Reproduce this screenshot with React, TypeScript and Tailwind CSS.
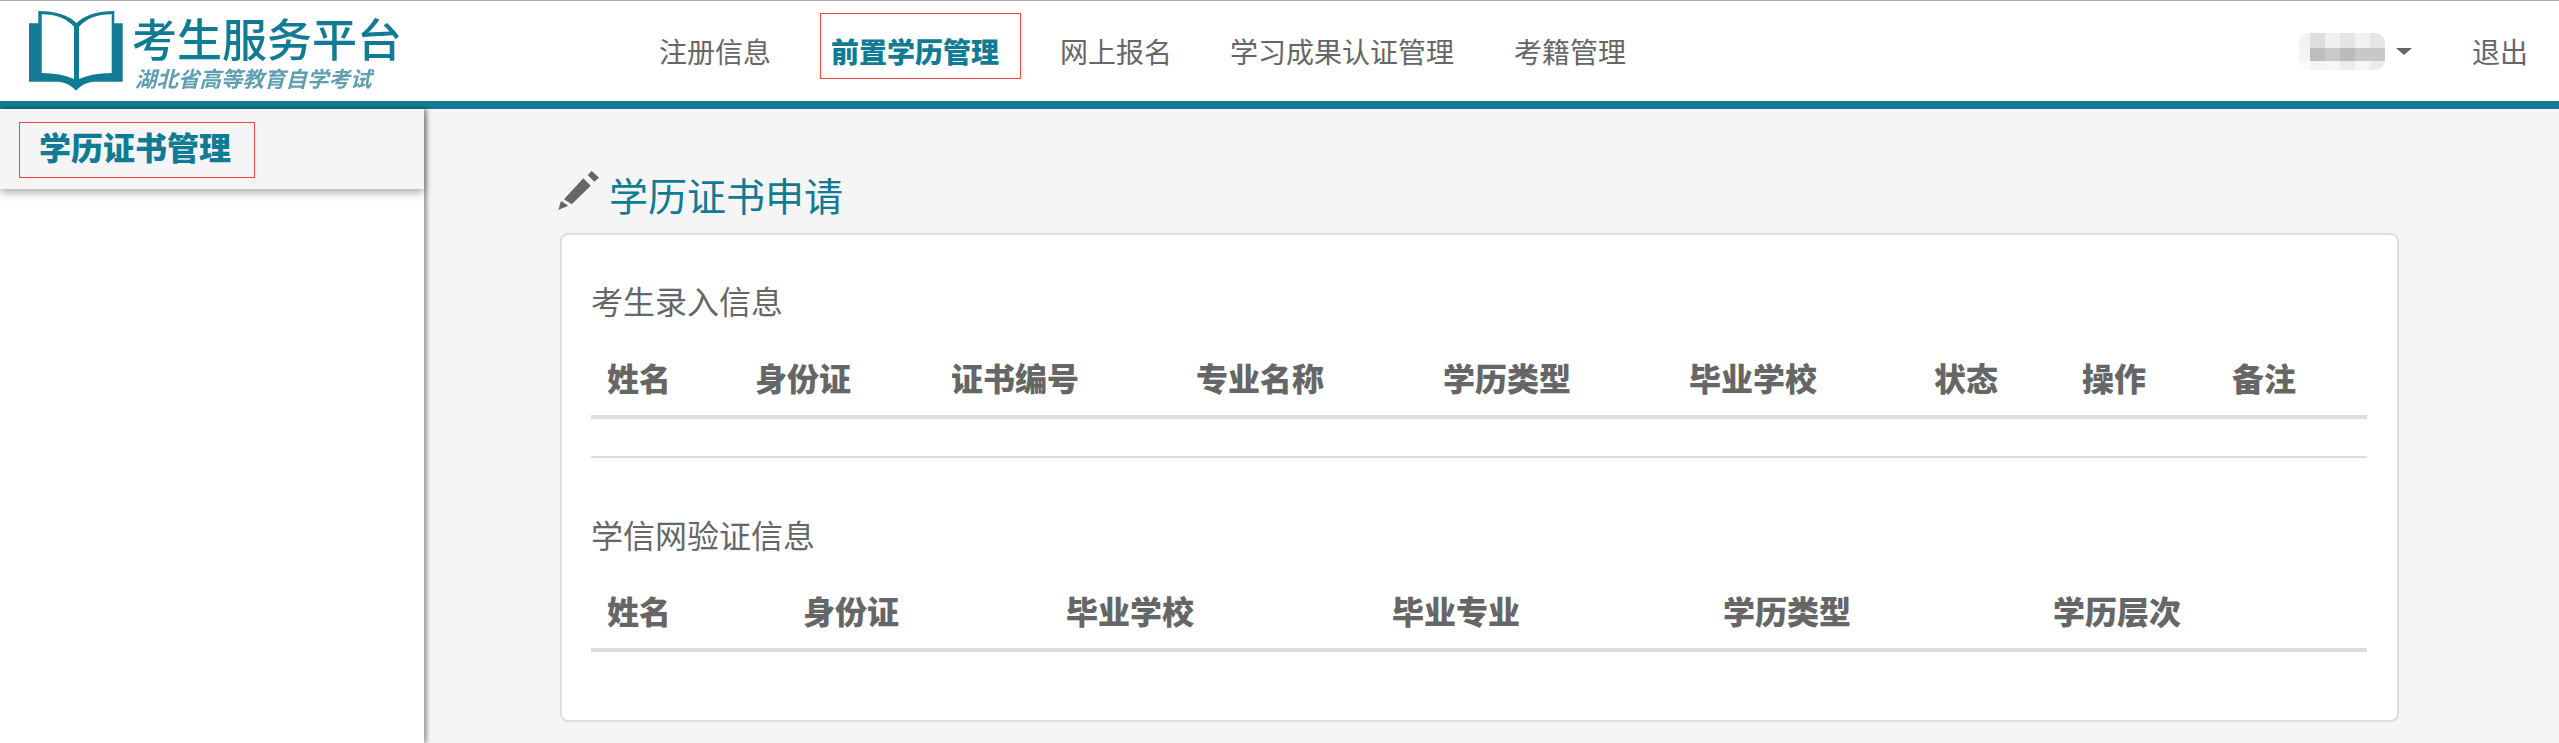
const SANS = "font-['Microsoft_YaHei','Noto_Sans_CJK_SC',sans-serif]";

function BookLogo() {
  return (
    <svg width="94" height="80" viewBox="0 0 94 80" className="shrink-0 blur-[0.5px]">
      <path
        fill="#107b93"
        fillRule="evenodd"
        d="M9.300 12.300 L0 12.300 L0 70.700 L30 70.700 Q40 72 47 79.500 Q54 72 64 70.700 L93.700 70.700 L93.700 12.300 L85.300 12.300 L85.300 0 Q60 0 47.500 12 Q35 0 9.300 0 Z M12.700 3.300 Q33 3 45 15.700 L45 68 Q32 62 12.700 62 Z M50 15.700 Q62 3 82.700 3.300 L82.700 62 Q63 62 50 68 Z"
      />
    </svg>
  );
}

function PencilIcon() {
  return (
    <svg width="42" height="40" viewBox="-1 -1 42 40" className="-ml-[2px] shrink-0">
      <path
        fill="#666666"
        d="M-0.700 38 L2 29 L9.300 33.700 Z M5 27.300 L24.300 6.300 L31.700 13.700 L12.700 32.300 Z M28.700 3 L32.700 -1 L40 5.700 L35.300 9.700 Z"
      />
    </svg>
  );
}

function UserMosaic() {
  const cells = [
    "#f3f3f3", "#dedede", "#f0f0f0", "#e4e4e4", "#f1f1f1", "#e6e6e6",
    "#f4f4f4", "#bdbdbd", "#c9c9c9", "#bbbbbb", "#c8c8c8", "#c8c8c8",
    "#fafafa", "#f4f4f4", "#f6f6f6", "#ececec", "#f6f6f6", "#ececec",
  ];
  return (
    <div className="grid w-[86px] grid-cols-[11px_15px_15px_15px_15px_15px] grid-rows-[15px_13px_9px] overflow-hidden rounded-[10px] blur-[0.5px]">
      {cells.map((c, i) => (
        <div key={i} style={{ backgroundColor: c }} />
      ))}
    </div>
  );
}

function HeaderTable({ cols }: { cols: { label: string; width: string }[] }) {
  return (
    <div className="border-b-4 border-[#dddddd]">
      <table className="w-full table-fixed">
        <thead>
          <tr>
            {cols.map((c) => (
              <th key={c.label} className={`${c.width} h-[74px] px-4 pb-[3px] text-left text-[32px] font-black leading-[32px] text-[#666666]`}>
                {c.label}
              </th>
            ))}
          </tr>
        </thead>
      </table>
    </div>
  );
}

const first = [
  { label: "姓名", width: "w-[148px]" },
  { label: "身份证", width: "w-[196px]" },
  { label: "证书编号", width: "w-[245px]" },
  { label: "专业名称", width: "w-[247px]" },
  { label: "学历类型", width: "w-[246px]" },
  { label: "毕业学校", width: "w-[245px]" },
  { label: "状态", width: "w-[148px]" },
  { label: "操作", width: "w-[150px]" },
  { label: "备注", width: "w-[151px]" },
];

const second = [
  { label: "姓名", width: "w-[196px]" },
  { label: "身份证", width: "w-[263px]" },
  { label: "毕业学校", width: "w-[326px]" },
  { label: "毕业专业", width: "w-[331px]" },
  { label: "学历类型", width: "w-[330px]" },
  { label: "学历层次", width: "w-[330px]" },
];

export default function App() {
  return (
    <div className={`flex h-[743px] flex-col overflow-hidden bg-[#f5f5f5] ${SANS}`}>
      <header className="flex h-[109px] shrink-0 items-stretch border-t border-b-[8px] border-t-[#aaaaaa] border-b-[#107b93] bg-white">
        <div className="flex w-[620px] shrink-0 items-start pl-[29px] pt-[10px]">
          <BookLogo />
          <div className="ml-[9px] mt-[2px] flex flex-col blur-[0.3px]">
            <span className="text-[45px] font-medium leading-[50px] text-[#107b93]">考生服务平台</span>
            <span className="ml-[3px] mt-[3px] text-[21.500px] font-bold italic leading-[24px] text-[#5f9fb0]">湖北省高等教育自学考试</span>
          </div>
        </div>
        <nav className="flex items-center pl-[39px] text-[28px] leading-[36px] text-[#666666]">
          <a className="mr-[49px] font-normal">注册信息</a>
          <a className="mb-[10px] mr-[39px] flex h-[66px] w-[201px] items-center border border-[#ee4444] pl-[10px] pt-[10px] font-black text-[#107b93]">前置学历管理</a>
          <a className="mr-[58px] font-normal">网上报名</a>
          <a className="mr-[60px] font-normal">学习成果认证管理</a>
          <a className="font-normal">考籍管理</a>
        </nav>
        <div className="ml-auto flex items-center text-[28px] font-normal text-[#666666]">
          <UserMosaic />
          <span className="ml-[11px] h-0 w-0 border-x-[8px] border-t-[7px] border-x-transparent border-t-[#666666]" />
          <a className="ml-[60px] mr-[31px] leading-[36px]">退出</a>
        </div>
      </header>

      <div className="flex min-h-0 flex-1">
        <aside className="w-[424px] shrink-0 bg-white shadow-[3px_0_4px_rgba(0,0,0,0.35)]">
          <div className="flex h-[80px] items-start bg-[#f5f5f5] pl-[19px] pt-[13px] shadow-[0_4px_8px_rgba(0,0,0,0.3)]">
            <div className="flex h-[56px] w-[236px] items-center border border-[#ee4444] pb-[8px] pl-[19px] text-[32px] font-black leading-[40px] text-[#107b93]">
              学历证书管理
            </div>
          </div>
        </aside>

        <main className="min-w-0 flex-1 pl-[136px] pr-[160px]">
          <h1 className="flex h-[124px] items-start pt-[62px] text-[39px] font-normal leading-[46px] text-[#107b93]">
            <PencilIcon />
            <span className="ml-[9px]">学历证书申请</span>
          </h1>
          <section className="h-[489px] rounded-[8px] border-2 border-[#dddddd] bg-white pl-[29px] pr-[30px] pt-[45px]">
            <h2 className="text-[32px] font-normal leading-[40px] text-[#666666]">考生录入信息</h2>
            <div className="mt-[21px]">
              <HeaderTable cols={first} />
            </div>
            <hr className="mt-[37px] border-t-2 border-[#dddddd]" />
            <h2 className="mt-[56px] text-[32px] font-normal leading-[40px] text-[#666666]">学信网验证信息</h2>
            <div className="mt-[20px]">
              <HeaderTable cols={second} />
            </div>
          </section>
        </main>
      </div>
    </div>
  );
}
